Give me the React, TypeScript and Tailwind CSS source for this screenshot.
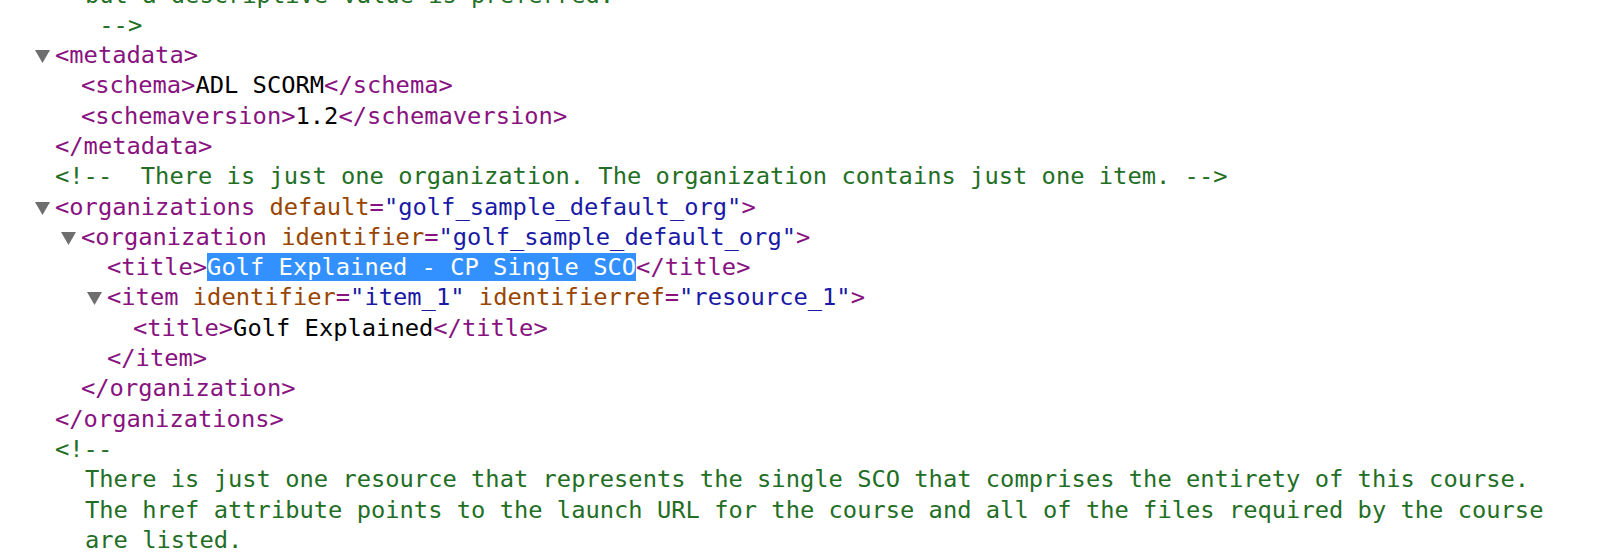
const TAG = "text-[#881280]";
const ATTR = "text-[#994500]";
const VAL = "text-[#1a1aa6]";
const CMT = "text-[#236e25]";

function Toggle() {
  return (
    <span className="flex w-[20px] shrink-0 pt-[10px]">
      <svg width="15" height="13" viewBox="0 0 15 13">
        <polygon points="0,0 15,0 7.5,13" fill="#6e6e6e" />
      </svg>
    </span>
  );
}

function Line({ pad, toggle, children }: { pad: string; toggle?: boolean; children: React.ReactNode }) {
  return (
    <div className={`flex h-[30.3px] items-start whitespace-pre ${pad}`}>
      {toggle && <Toggle />}
      <span>{children}</span>
    </div>
  );
}

function Open({ name, attrs = [] }: { name: string; attrs?: [string, string][] }) {
  return (
    <>
      <span className={TAG}>{"<" + name}</span>
      {attrs.map(([k, v]) => (
        <span key={k}>
          <span className={ATTR}>{" " + k}</span>
          <span className={TAG}>=</span>
          <span className={VAL}>"{v}"</span>
        </span>
      ))}
      <span className={TAG}>{">"}</span>
    </>
  );
}

function Close({ name }: { name: string }) {
  return <span className={TAG}>{"</" + name + ">"}</span>;
}

export default function App() {
  return (
    <div className="h-[559px] w-[1600px] overflow-hidden bg-white">
      <div className="-mt-[20.5px] font-['DejaVu_Sans_Mono',monospace] text-[23.75px] leading-[30.3px] text-black">
        {/* tail of the previous comment */}
        <Line pad="pl-[85px]">
          <span className={CMT}>but a descriptive value is preferred.</span>
        </Line>
        <Line pad="pl-[85px]">
          <span className={CMT}> --&gt;</span>
        </Line>

        <Line pad="pl-[35px]" toggle>
          <Open name="metadata" />
        </Line>
        <Line pad="pl-[81px]">
          <Open name="schema" />
          ADL SCORM
          <Close name="schema" />
        </Line>
        <Line pad="pl-[81px]">
          <Open name="schemaversion" />
          1.2
          <Close name="schemaversion" />
        </Line>
        <Line pad="pl-[55px]">
          <Close name="metadata" />
        </Line>
        <Line pad="pl-[55px]">
          <span className={CMT}>{"<!--  There is just one organization. The organization contains just one item. -->"}</span>
        </Line>

        <Line pad="pl-[35px]" toggle>
          <Open name="organizations" attrs={[["default", "golf_sample_default_org"]]} />
        </Line>
        <Line pad="pl-[61px]" toggle>
          <Open name="organization" attrs={[["identifier", "golf_sample_default_org"]]} />
        </Line>
        <Line pad="pl-[107px]">
          <Open name="title" />
          <span className="bg-[#3390ff] text-white">Golf Explained - CP Single SCO</span>
          <Close name="title" />
        </Line>
        <Line pad="pl-[87px]" toggle>
          <Open
            name="item"
            attrs={[
              ["identifier", "item_1"],
              ["identifierref", "resource_1"],
            ]}
          />
        </Line>
        <Line pad="pl-[133px]">
          <Open name="title" />
          Golf Explained
          <Close name="title" />
        </Line>
        <Line pad="pl-[107px]">
          <Close name="item" />
        </Line>
        <Line pad="pl-[81px]">
          <Close name="organization" />
        </Line>
        <Line pad="pl-[55px]">
          <Close name="organizations" />
        </Line>

        <Line pad="pl-[55px]">
          <span className={CMT}>{"<!--"}</span>
        </Line>
        <Line pad="pl-[85px]">
          <span className={CMT}>There is just one resource that represents the single SCO that comprises the entirety of this course.</span>
        </Line>
        <Line pad="pl-[85px]">
          <span className={CMT}>The href attribute points to the launch URL for the course and all of the files required by the course</span>
        </Line>
        <Line pad="pl-[85px]">
          <span className={CMT}>are listed.</span>
        </Line>
      </div>
    </div>
  );
}
